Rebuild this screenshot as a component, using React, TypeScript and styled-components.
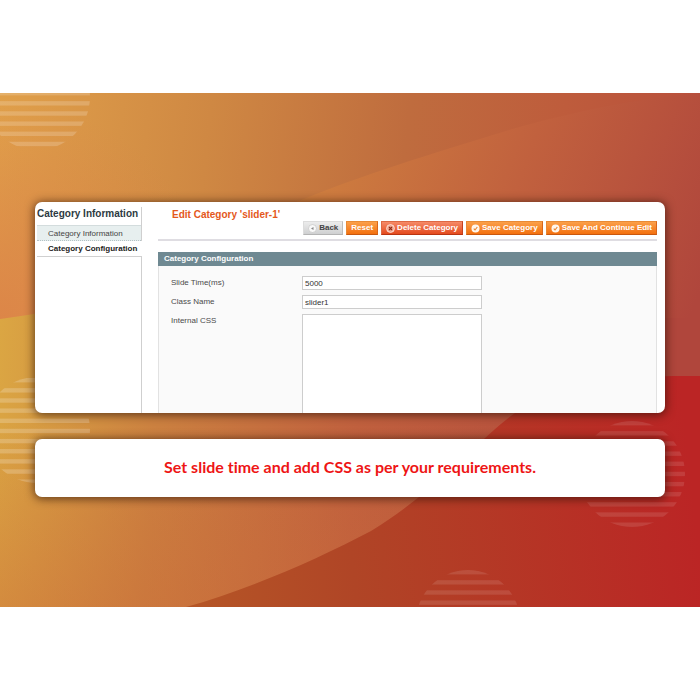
import React from 'react';
import styled, { createGlobalStyle, css } from 'styled-components';

const GlobalStyle = createGlobalStyle`
  *, *::before, *::after { box-sizing: border-box; }
  body { margin: 0; background: #fff; font-family: "Liberation Sans", Arial, sans-serif; }
`;

const Page = styled.main`
  min-height: 100vh;
  display: flex;
  flex-direction: column;
  justify-content: center;
`;

const Banner = styled.section`
  position: relative;
  isolation: isolate;
  display: flex;
  flex-direction: column;
  gap: 26px;
  padding: 109px 5% 110px;
  overflow: hidden;
`;

const Backdrop = styled.svg`
  position: absolute;
  inset: 0;
  z-index: -1;
  width: 100%;
  height: 100%;
`;

const Card = styled.div`
  background: #fff;
  border-radius: 7px;
  box-shadow: 0 1px 10px 1px rgba(40, 15, 5, 0.65);
`;

const AdminCard = styled(Card)`
  display: flex;
  gap: 16px;
  padding: 5px 8px 0 2px;
  overflow: hidden;
`;

const Sidebar = styled.nav`
  flex: 0 0 105px;
  border-right: 1px solid #cfcfcf;
`;

const SidebarTitle = styled.h2`
  margin: 0;
  height: 18px;
  font-size: 10px;
  line-height: 13px;
  color: #2c3a42;
  white-space: nowrap;
`;

const TabLink = styled.a<{ $active?: boolean }>`
  display: block;
  height: 16px;
  padding-left: 11px;
  font-size: 8px;
  line-height: 15px;
  white-space: nowrap;
  text-decoration: none;
  color: #444;
  background: #e7efef;
  border-top: 1px solid #d3dcdd;
  border-bottom: 1px dotted #b5c3c6;
  ${({ $active }) =>
    $active &&
    css`
      margin-right: -1px;
      font-weight: bold;
      line-height: 16px;
      color: #222;
      background: #fff;
      border-top: 0;
      border-bottom: 1px solid #d0d0d0;
    `}
`;

const Content = styled.div`
  flex: 1;
  min-width: 0;
`;

const Header = styled.header`
  display: flex;
  flex-direction: column;
  border-bottom: 2px solid #dfdde2;
  padding-bottom: 4px;
`;

const Title = styled.h1`
  margin: 0;
  padding: 2px 0 0 14px;
  font-size: 10px;
  line-height: 12px;
  color: #e4581b;
`;

const Actions = styled.div`
  display: flex;
  justify-content: flex-end;
  gap: 3px;
`;

type Tone = 'plain' | 'primary' | 'danger';

const tones = {
  plain: css`
    color: #444;
    border-color: #dcdcdc #bcbcbc #b4b4b4 #dcdcdc;
    background: linear-gradient(#ececec, #cfd0d1);
  `,
  primary: css`
    color: #fff;
    border-color: #e88a35 #d8661a #c9580f #e88a35;
    background: linear-gradient(#fba04a, #f3700f);
  `,
  danger: css`
    color: #fff;
    border-color: #dd6843 #c6401c #b93411 #dd6843;
    background: linear-gradient(#f58a68, #e44a1d);
  `,
};

const ActionButton = styled.button<{ $tone: Tone }>`
  display: flex;
  align-items: center;
  gap: 2px;
  height: 14px;
  padding: 0 4px;
  border: 1px solid;
  font: bold 8px/12px "Liberation Sans", Arial, sans-serif;
  white-space: nowrap;
  cursor: pointer;
  ${({ $tone }) => tones[$tone]}
`;

const ButtonIcon = styled.svg`
  width: 9px;
  height: 9px;
  flex: none;
`;

const FieldsetTitle = styled.h3`
  margin: 11px 0 0;
  padding-left: 6px;
  font-size: 8px;
  line-height: 14px;
  color: #fff;
  background: #6f8992;
`;

const Fields = styled.form`
  display: grid;
  grid-template-columns: 131px minmax(0, 180px);
  row-gap: 5px;
  padding: 10px 0 0 12px;
  background: #fafafa;
  border: 1px solid #e2e2e2;
  border-width: 0 1px;
`;

const Label = styled.label`
  font-size: 8px;
  line-height: 13px;
  color: #4a4a4a;
`;

const fieldStyle = css`
  width: 100%;
  border: 1px solid #cdcdcd;
  border-radius: 0;
  background: #fff;
  color: #333;
  font: 8px/12px "Liberation Sans", Arial, sans-serif;
  padding: 0 2px;
  outline: none;
`;

const TextInput = styled.input`
  ${fieldStyle}
  height: 14px;
`;

const TextArea = styled.textarea`
  ${fieldStyle}
  display: block;
  height: 99px;
  border-bottom: 0;
  resize: none;
`;

const CaptionCard = styled(Card)`
  padding: 18px 16px 20px;
`;

const Caption = styled.p`
  margin: 0;
  text-align: center;
  font: bold 16px/20px Lato, "Open Sans", sans-serif;
  font-variant-ligatures: none;
  color: #ee1515;
`;

const circles = [
  { id: 'top-left', cx: 37, cy: 4, r: 53, first: -2, count: 6, opacity: 0.18 },
  { id: 'left', cx: 37, cy: 337, r: 53, first: 285, count: 11, opacity: 0.2 },
  { id: 'right', cx: 632, cy: 381, r: 53, first: 328, count: 11, opacity: 0.11 },
  { id: 'bottom', cx: 468, cy: 529, r: 52, first: 477, count: 4, opacity: 0.11 },
];

function BannerBackdrop() {
  return (
    <Backdrop viewBox="0 0 700 514" preserveAspectRatio="none" aria-hidden="true">
      <defs>
        <linearGradient id="base" gradientUnits="userSpaceOnUse" x1="0" y1="230" x2="660" y2="280">
          <stop offset="0" stopColor="#dba643" />
          <stop offset="0.25" stopColor="#cb8040" />
          <stop offset="0.55" stopColor="#c0603e" />
          <stop offset="1" stopColor="#b0463c" />
        </linearGradient>
        <linearGradient id="mid" gradientUnits="userSpaceOnUse" x1="300" y1="80" x2="690" y2="225">
          <stop offset="0" stopColor="#cf803f" />
          <stop offset="0.5" stopColor="#c1613e" />
          <stop offset="1" stopColor="#b0463c" />
        </linearGradient>
        <linearGradient id="upper" gradientUnits="userSpaceOnUse" x1="0" y1="0" x2="700" y2="80">
          <stop offset="0" stopColor="#e0a04a" />
          <stop offset="0.3" stopColor="#cf8843" />
          <stop offset="0.58" stopColor="#bf6c3e" />
          <stop offset="0.8" stopColor="#be5c3c" />
          <stop offset="1" stopColor="#b84f3c" />
        </linearGradient>
        <radialGradient id="warm" gradientUnits="userSpaceOnUse" cx="0" cy="226" r="220">
          <stop offset="0" stopColor="#dc8048" stopOpacity="0.8" />
          <stop offset="1" stopColor="#dc8048" stopOpacity="0" />
        </radialGradient>
        <linearGradient id="floor" gradientUnits="userSpaceOnUse" x1="0" y1="330" x2="0" y2="514">
          <stop offset="0" stopColor="#cc6a38" stopOpacity="0" />
          <stop offset="1" stopColor="#cc6a38" stopOpacity="0.4" />
        </linearGradient>
        <linearGradient id="lower" gradientUnits="userSpaceOnUse" x1="190" y1="460" x2="720" y2="400">
          <stop offset="0" stopColor="#b55526" />
          <stop offset="0.3" stopColor="#b04526" />
          <stop offset="0.95" stopColor="#bb2525" />
        </linearGradient>
        {circles.map((c) => (
          <clipPath id={c.id} key={c.id}>
            <circle cx={c.cx} cy={c.cy} r={c.r} />
          </clipPath>
        ))}
      </defs>
      <rect width="700" height="514" fill="url(#base)" />
      <rect y="330" width="700" height="184" fill="url(#floor)" />
      <path d="M200 0H700V225H200Z" fill="url(#mid)" />
      <path d="M0 0H700C640 5 560 20 480 46C400 70 330 94 290 112C200 160 130 210 0 226Z" fill="url(#upper)" />
      <path d="M0 0H290V112C200 160 130 210 0 226Z" fill="url(#warm)" />
      <path d="M186 514C250 496 318 466 371 438C434 400 480 345 515 320C570 283 630 283 700 283V514Z" fill="url(#lower)" />
      {circles.map((c) => (
        <g key={c.id} clipPath={`url(#${c.id})`} fill="#fff" fillOpacity={c.opacity}>
          {Array.from({ length: c.count }, (_, i) => (
            <rect key={i} x={c.cx - c.r} y={c.first + i * 10.15} width={c.r * 2} height="4.4" />
          ))}
        </g>
      ))}
    </Backdrop>
  );
}

const BackIcon = () => (
  <ButtonIcon viewBox="0 0 18 18" aria-hidden="true">
    <circle cx="9" cy="9" r="8" fill="#f8f8f8" stroke="#c4c4c4" strokeWidth="1.4" />
    <path d="M6 9L11 6V12Z" fill="#888" />
  </ButtonIcon>
);

const DeleteIcon = () => (
  <ButtonIcon viewBox="0 0 18 18" aria-hidden="true">
    <circle cx="9" cy="9" r="7.8" fill="#f0a48e" stroke="#ffe9e1" strokeWidth="1.8" />
    <path d="M6 6L12 12M12 6L6 12" stroke="#8f2a14" strokeWidth="2.2" />
  </ButtonIcon>
);

const SaveIcon = () => (
  <ButtonIcon viewBox="0 0 18 18" aria-hidden="true">
    <circle cx="9" cy="9" r="8" fill="#fff6ec" />
    <path d="M5.5 9.4L8 12L12.6 6" fill="none" stroke="#e8822c" strokeWidth="2.2" />
  </ButtonIcon>
);

export default function App() {
  return (
    <>
      <GlobalStyle />
      <Page>
        <Banner>
          <BannerBackdrop />
          <AdminCard>
            <Sidebar aria-label="Category sections">
              <SidebarTitle>Category Information</SidebarTitle>
              <TabLink href="#information">Category Information</TabLink>
              <TabLink href="#configuration" $active aria-current="page">
                Category Configuration
              </TabLink>
            </Sidebar>
            <Content>
              <Header>
                <Title>Edit Category 'slider-1'</Title>
                <Actions>
                  <ActionButton type="button" $tone="plain"><BackIcon />Back</ActionButton>
                  <ActionButton type="button" $tone="primary">Reset</ActionButton>
                  <ActionButton type="button" $tone="danger"><DeleteIcon />Delete Category</ActionButton>
                  <ActionButton type="button" $tone="primary"><SaveIcon />Save Category</ActionButton>
                  <ActionButton type="button" $tone="primary"><SaveIcon />Save And Continue Edit</ActionButton>
                </Actions>
              </Header>
              <FieldsetTitle>Category Configuration</FieldsetTitle>
              <Fields>
                <Label htmlFor="slide-time">Slide Time(ms)</Label>
                <TextInput id="slide-time" defaultValue="5000" />
                <Label htmlFor="class-name">Class Name</Label>
                <TextInput id="class-name" defaultValue="slider1" />
                <Label htmlFor="internal-css">Internal CSS</Label>
                <TextArea id="internal-css" />
              </Fields>
            </Content>
          </AdminCard>
          <CaptionCard>
            <Caption>Set slide time and add CSS as per your requirements.</Caption>
          </CaptionCard>
        </Banner>
      </Page>
    </>
  );
}
